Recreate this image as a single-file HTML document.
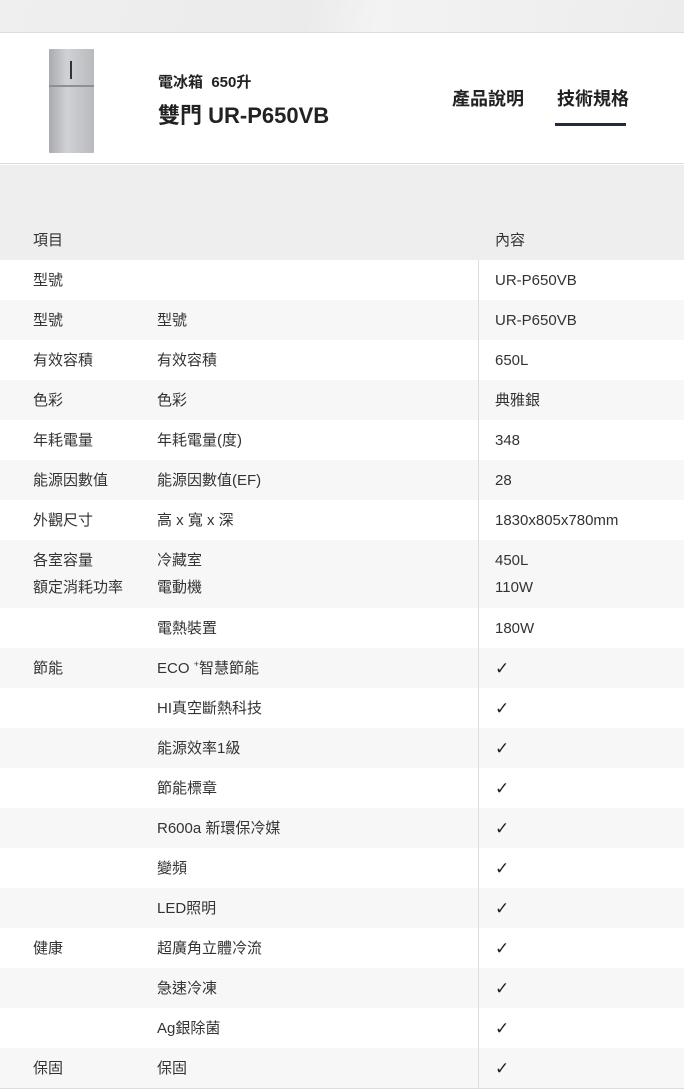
<!DOCTYPE html>
<html><head><meta charset="utf-8"><style>
*{margin:0;padding:0;box-sizing:border-box}
body{width:684px;height:1090px;background:#fff;font-family:"Liberation Sans","Noto Sans CJK TC",sans-serif;color:#333;position:relative;overflow:hidden}
.top{position:absolute;left:0;top:0;width:684px;height:33px;background:linear-gradient(100deg,#efefef 0%,#ebebeb 45%,#f3f3f3 55%,#ececec 100%);border-bottom:1px solid #ddd}
.hdr{position:absolute;left:0;top:34px;width:684px;height:130px;background:#fff;border-bottom:1px solid #ddd}
.fridge{position:absolute;left:49px;top:49px;width:45px;height:104px;background:linear-gradient(90deg,#a9abb0,#cfd1d5 40%,#b8babe);border-radius:1px}
.fridge:before{content:"";position:absolute;left:0;top:36px;width:45px;height:2px;background:#8d8f93}
.fridge:after{content:"";position:absolute;left:21px;top:12px;width:2px;height:18px;background:#333}
.t1{position:absolute;left:158px;top:73px;font-size:15px;line-height:20px;font-weight:bold;color:#222}
.t2{position:absolute;left:158px;top:102px;font-size:22px;line-height:28px;font-weight:bold;color:#222}
.tab{position:absolute;top:87px;font-size:18px;line-height:24px;font-weight:bold;color:#222}
.ul{position:absolute;left:555px;top:123px;width:71px;height:3px;background:#252b3a}
.grey{position:absolute;left:0;top:165px;width:684px;height:95px;background:#eee}
.hd{position:absolute;top:231px;font-size:15px;line-height:20px}
.row{position:absolute;left:0;width:684px;height:40px;font-size:15px}
.row span{position:absolute;top:11px;line-height:20px;height:20px;white-space:nowrap}
.row sup{font-size:9px;line-height:0;vertical-align:6px}
.g{background:#f7f7f7}
.c1{left:33px}.c2{left:157px}.c3{left:495px}
.ck{font-weight:bold;font-family:"DejaVu Sans",sans-serif;font-size:17px;color:#222}
.vl{position:absolute;left:478px;top:260px;width:1px;height:828px;background:#ddd}
.bl{position:absolute;left:0;top:1088px;width:684px;height:1px;background:#ddd}
</style></head><body>
<div class="top"></div>
<div class="hdr"></div>
<div class="fridge"></div>
<div class="t1">電冰箱&nbsp; 650升</div>
<div class="t2">雙門&nbsp;UR-P650VB</div>
<div class="tab" style="left:452px">產品說明</div>
<div class="tab" style="left:557px">技術規格</div>
<div class="ul"></div>
<div class="grey"></div>
<div class="hd" style="left:33px">項目</div>
<div class="hd" style="left:495px">內容</div>

<div class="row" style="top:260px"><span class="c1">型號</span><span class="c3">UR-P650VB</span></div>
<div class="row g" style="top:300px"><span class="c1">型號</span><span class="c2">型號</span><span class="c3">UR-P650VB</span></div>
<div class="row" style="top:340px"><span class="c1">有效容積</span><span class="c2">有效容積</span><span class="c3">650L</span></div>
<div class="row g" style="top:380px"><span class="c1">色彩</span><span class="c2">色彩</span><span class="c3">典雅銀</span></div>
<div class="row" style="top:420px"><span class="c1">年耗電量</span><span class="c2">年耗電量(度)</span><span class="c3">348</span></div>
<div class="row g" style="top:460px"><span class="c1">能源因數值</span><span class="c2">能源因數值(EF)</span><span class="c3">28</span></div>
<div class="row" style="top:500px"><span class="c1">外觀尺寸</span><span class="c2">高 x 寬 x 深</span><span class="c3">1830x805x780mm</span></div>
<div class="row g" style="top:540px;height:68px"><span class="c1">各室容量</span><span class="c2">冷藏室</span><span class="c3">450L</span><span class="c1" style="top:38px">額定消耗功率</span><span class="c2" style="top:38px">電動機</span><span class="c3" style="top:38px">110W</span></div>
<div class="row" style="top:608px"><span class="c2">電熱裝置</span><span class="c3">180W</span></div>
<div class="row g" style="top:648px"><span class="c1">節能</span><span class="c2">ECO <sup>+</sup>智慧節能</span><span class="c3 ck">✓</span></div>
<div class="row" style="top:688px"><span class="c2">HI真空斷熱科技</span><span class="c3 ck">✓</span></div>
<div class="row g" style="top:728px"><span class="c2">能源效率1級</span><span class="c3 ck">✓</span></div>
<div class="row" style="top:768px"><span class="c2">節能標章</span><span class="c3 ck">✓</span></div>
<div class="row g" style="top:808px"><span class="c2">R600a 新環保冷媒</span><span class="c3 ck">✓</span></div>
<div class="row" style="top:848px"><span class="c2">變頻</span><span class="c3 ck">✓</span></div>
<div class="row g" style="top:888px"><span class="c2">LED照明</span><span class="c3 ck">✓</span></div>
<div class="row" style="top:928px"><span class="c1">健康</span><span class="c2">超廣角立體冷流</span><span class="c3 ck">✓</span></div>
<div class="row g" style="top:968px"><span class="c2">急速冷凍</span><span class="c3 ck">✓</span></div>
<div class="row" style="top:1008px"><span class="c2">Ag銀除菌</span><span class="c3 ck">✓</span></div>
<div class="row g" style="top:1048px"><span class="c1">保固</span><span class="c2">保固</span><span class="c3 ck">✓</span></div>
<div class="vl"></div>
<div class="bl"></div>
</body></html>
